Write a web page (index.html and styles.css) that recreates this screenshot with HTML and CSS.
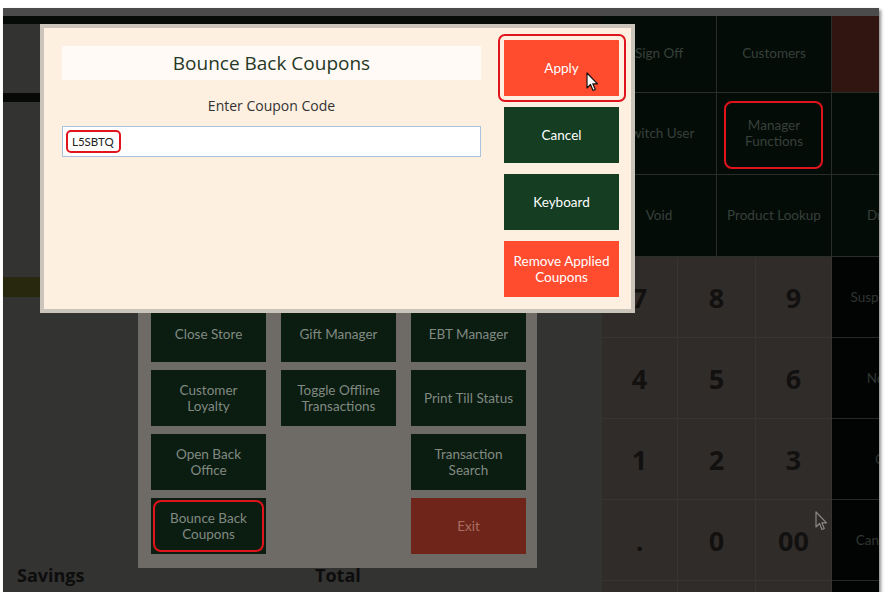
FILE: index.html
```html
<!DOCTYPE html>
<html lang="en">
<head>
    <meta charset="UTF-8">
    <meta name="viewport" content="width=device-width, initial-scale=1.0">
    <title>Bounce Back Coupons</title>
    <link rel="stylesheet" href="styles.css">
</head>
<body>

    <div class="shot">
        <div class="top-strip"></div>

        <div class="main">
            <!-- sale area on the left, dimmed under the dialogs -->
            <div class="sale">
                <div class="band band-top"></div>
                <div class="band band-black"></div>
                <div class="band band-olive"></div>
                <div class="totals">
                    <span class="savings">Savings</span>
                    <span class="total">Total</span>
                </div>
            </div>

            <div class="actions">
                <div class="fn-grid">
                    <div class="fn-cell">Sign Off</div>
                    <div class="fn-cell">Customers</div>
                    <div class="fn-cell brown"></div>
                    <div class="fn-cell">Switch User</div>
                    <div class="fn-cell marked">Manager<br>Functions</div>
                    <div class="fn-cell"></div>
                    <div class="fn-cell">Void</div>
                    <div class="fn-cell">Product Lookup</div>
                    <div class="fn-cell">Drawer</div>
                </div>

                <div class="pad-row">
                    <div class="keypad">
                        <div class="key">7</div>
                        <div class="key">8</div>
                        <div class="key">9</div>
                        <div class="key">4</div>
                        <div class="key">5</div>
                        <div class="key">6</div>
                        <div class="key">1</div>
                        <div class="key">2</div>
                        <div class="key">3</div>
                        <div class="key">.</div>
                        <div class="key">0</div>
                        <div class="key">00</div>
                        <div class="key"></div>
                        <div class="key"></div>
                        <div class="key"></div>
                    </div>
                    <div class="side-col">
                        <div class="side-cell">Suspend Sale</div>
                        <div class="side-cell">No Sale</div>
                        <div class="side-cell">Cash</div>
                        <div class="side-cell">Cancel Sale</div>
                        <div class="side-cell"></div>
                    </div>
                </div>
            </div>
        </div>

        <!-- manager functions popup -->
        <div class="manager">
            <div class="m-btn">Close Store</div>
            <div class="m-btn">Gift Manager</div>
            <div class="m-btn">EBT Manager</div>
            <div class="m-btn">Customer<br>Loyalty</div>
            <div class="m-btn">Toggle Offline<br>Transactions</div>
            <div class="m-btn">Print Till Status</div>
            <div class="m-btn">Open Back<br>Office</div>
            <div class="m-gap"></div>
            <div class="m-btn">Transaction<br>Search</div>
            <div class="m-btn marked">Bounce Back<br>Coupons</div>
            <div class="m-gap"></div>
            <div class="m-btn exit">Exit</div>
        </div>

        <!-- coupon dialog -->
        <div class="dialog">
            <div class="dialog-main">
                <div class="dialog-title">Bounce Back Coupons</div>
                <div class="dialog-label">Enter Coupon Code</div>
                <div class="field"><span class="code">L5SBTQ</span></div>
            </div>
            <div class="dialog-actions">
                <div class="dlg-btn hot marked">Apply</div>
                <div class="dlg-btn">Cancel</div>
                <div class="dlg-btn">Keyboard</div>
                <div class="dlg-btn hot">Remove Applied<br>Coupons</div>
            </div>
        </div>

        <svg class="cursor cursor-apply" width="13" height="20" viewBox="0 0 13 20">
            <path d="M1 1 L1 16 L4.5 12.5 L7 18.5 L9.3 17.5 L6.8 11.8 L11.5 11.8 Z" fill="#fff" stroke="#111" stroke-width="1.2" stroke-linejoin="round"/>
        </svg>
        <svg class="cursor cursor-pad" width="13" height="20" viewBox="0 0 13 20">
            <path d="M1 1 L1 16 L4.5 12.5 L7 18.5 L9.3 17.5 L6.8 11.8 L11.5 11.8 Z" fill="#2f2c2a" stroke="#8a8784" stroke-width="1.2" stroke-linejoin="round"/>
        </svg>
    </div>

</body>
</html>
```

FILE: styles.css
```css
body {
    margin: 0;
    background: #fff;
    font-family: Lato, "Open Sans", sans-serif;
}

.shot {
    position: relative;
    width: 876px;
    height: 584px;
    margin: 8px 0 0 3px;
    overflow: hidden;
    background: #333331;
    box-shadow: 2px 2px 3px rgba(0, 0, 0, 0.45);
    display: flex;
    flex-direction: column;
}

.top-strip {
    height: 8px;
    flex: none;
    background: #4b4b4b;
}

.main {
    flex: 1;
    display: flex;
    min-height: 0;
}

/* left sale area */
.sale {
    width: 599px;
    flex: none;
    display: flex;
    flex-direction: column;
}

.band-top {
    height: 8px;
    background: #060b07;
}

.band-black {
    height: 9px;
    margin-top: 69px;
    background: #070907;
}

.band-olive {
    height: 20px;
    margin-top: 175px;
    background: #28280f;
}

.totals {
    margin-top: auto;
    display: flex;
    padding: 0 0 5px 14px;
    font-family: "Open Sans", sans-serif;
    font-size: 18px;
    font-weight: 700;
    color: #0d0d0d;
}

.savings {
    width: 298px;
}

/* right side function buttons */
.actions {
    width: 345px;
    flex: none;
    display: flex;
    flex-direction: column;
}

.fn-grid {
    display: grid;
    grid-template-columns: repeat(3, 115px);
    grid-template-rows: 77px 82px 82px;
    background: #040c08;
}

.fn-cell {
    position: relative;
    display: flex;
    align-items: center;
    justify-content: center;
    text-align: center;
    border-right: 1px solid #2a2e2b;
    border-bottom: 1px solid #2a2e2b;
    color: #37403a;
    font-size: 13.5px;
    line-height: 1.15;
}

.fn-cell.brown {
    background: #311511;
}

.fn-cell.marked::after {
    content: "";
    position: absolute;
    top: 8px;
    right: 8px;
    bottom: 5px;
    left: 7px;
    border: 2px solid #e0141a;
    border-radius: 8px;
}

.pad-row {
    flex: 1;
    display: flex;
}

.keypad {
    width: 230px;
    display: grid;
    grid-template-columns: 76px 78px 76px;
    grid-auto-rows: 81px;
    background: #302c2a;
    border-right: 1px solid #3b3735;
    box-sizing: border-box;
}

.key {
    display: flex;
    align-items: center;
    justify-content: center;
    border-right: 1px solid #383432;
    border-bottom: 1px solid #383432;
    font-family: "Open Sans", sans-serif;
    font-size: 27px;
    font-weight: 700;
    color: #121110;
}

.side-col {
    width: 115px;
    display: grid;
    grid-auto-rows: 81px;
    background: #020403;
}

.side-cell {
    display: flex;
    align-items: center;
    justify-content: center;
    border-bottom: 1px solid #262a27;
    color: #2f3531;
    font-size: 13.5px;
}

/* manager functions popup */
.manager {
    position: absolute;
    left: 135px;
    top: 284px;
    width: 399px;
    height: 276px;
    box-sizing: border-box;
    padding: 13px 11px 14px 13px;
    background: #6e6b66;
    display: grid;
    grid-template-columns: repeat(3, 115px);
    grid-auto-rows: 56px;
    column-gap: 15px;
    row-gap: 8px;
    align-content: end;
}

.m-btn {
    position: relative;
    display: flex;
    align-items: center;
    justify-content: center;
    text-align: center;
    background: #0b1c11;
    color: #808a82;
    font-size: 13.5px;
    line-height: 1.2;
}

.m-btn.exit {
    background: #6f2519;
    color: #a86e62;
}

.m-btn.marked::after {
    content: "";
    position: absolute;
    inset: 2px;
    border: 2px solid #e0141a;
    border-radius: 8px;
}

/* coupon dialog */
.dialog {
    position: absolute;
    left: 37px;
    top: 16px;
    width: 595px;
    height: 289px;
    box-sizing: border-box;
    border: 4px solid #cbc4bb;
    background: #fdf0e1;
    padding: 12px 12px 11px 18px;
    display: flex;
    gap: 23px;
}

.dialog-main {
    width: 419px;
    padding-top: 6px;
    display: flex;
    flex-direction: column;
}

.dialog-title {
    height: 34px;
    display: flex;
    align-items: center;
    justify-content: center;
    background: #fffaf5;
    color: #263826;
    font-family: "Open Sans", sans-serif;
    font-size: 19px;
}

.dialog-label {
    margin-top: 16px;
    text-align: center;
    color: #333;
    font-family: "Open Sans", sans-serif;
    font-size: 14px;
}

.field {
    height: 31px;
    margin-top: 11px;
    box-sizing: border-box;
    padding-left: 3px;
    display: flex;
    align-items: center;
    background: #fff;
    border: 1px solid #a9c3dd;
}

.code {
    padding: 3px 5px 3px 4px;
    border: 2px solid #e0141a;
    border-radius: 5px;
    color: #222;
    font-size: 11.5px;
}

.dialog-actions {
    width: 115px;
    display: flex;
    flex-direction: column;
    gap: 11px;
}

.dlg-btn {
    position: relative;
    height: 56px;
    display: flex;
    align-items: center;
    justify-content: center;
    text-align: center;
    background: #143d22;
    color: #fff;
    font-size: 13.5px;
    line-height: 1.2;
}

.dlg-btn.hot {
    background: #ff4c2f;
}

.dlg-btn.marked::after {
    content: "";
    position: absolute;
    top: -6px;
    right: -7px;
    bottom: -6px;
    left: -6px;
    border: 2px solid #e0141a;
    border-radius: 7px;
}

.cursor {
    position: absolute;
}

.cursor-apply {
    left: 583px;
    top: 64px;
}

.cursor-pad {
    left: 812px;
    top: 503px;
}
```
